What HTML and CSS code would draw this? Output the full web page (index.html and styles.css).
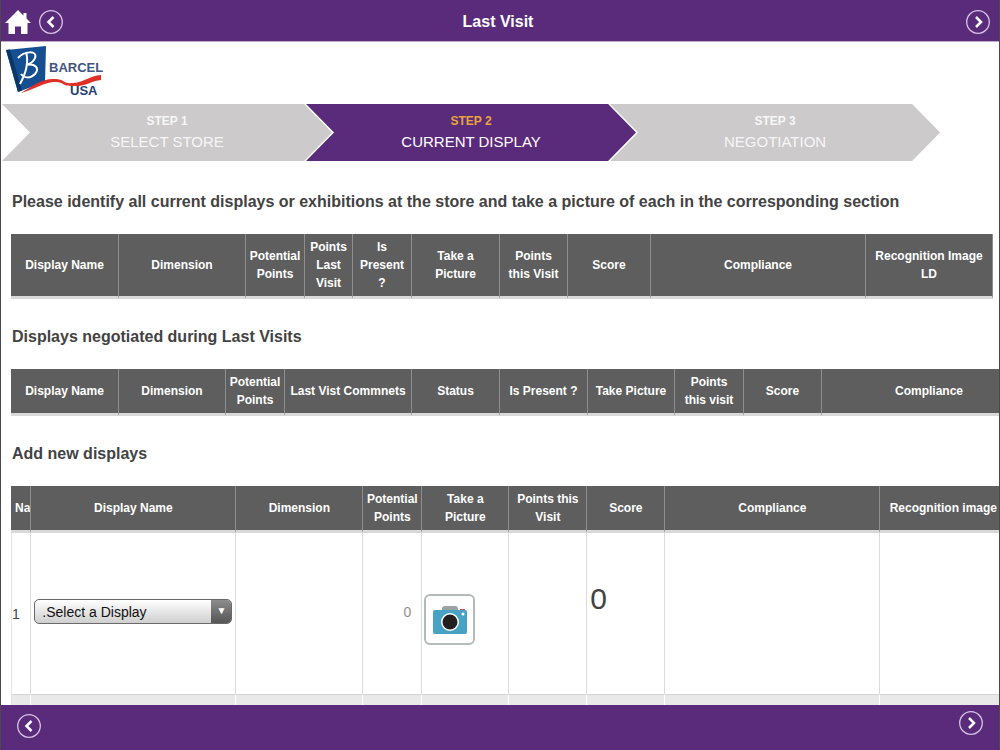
FILE: index.html
```html
<!DOCTYPE html>
<html lang="en">
<head>
<meta charset="utf-8">
<title>Last Visit</title>
<link rel="stylesheet" href="styles.css">
</head>
<body>
<div class="app">
  <header class="topbar">
    <div class="topbar-side">
      <button class="icon-btn" type="button" aria-label="Home">
        <svg width="26" height="26" viewBox="0 0 26 26"><path fill="#fff" d="M13 1 L18.500 6.500 V4 H21.500 V9.500 L26 14 H22.500 V25 H16 V17.500 H10 V25 H3.500 V14 H0 Z"/></svg>
      </button>
      <button class="icon-btn" type="button" aria-label="Back">
        <svg width="26" height="26" viewBox="0 0 26 26" fill="none"><circle cx="13" cy="13" r="11.300" stroke="#d5c5e3" stroke-width="1.300"/><path d="M15.500 8 L10.500 13 L15.500 18" stroke="#fff" stroke-width="2.500"/></svg>
      </button>
    </div>
    <h1 class="title">Last Visit</h1>
    <div class="topbar-side topbar-end">
      <button class="icon-btn" type="button" aria-label="Next">
        <svg width="26" height="26" viewBox="0 0 26 26" fill="none"><circle cx="13" cy="13" r="11.300" stroke="#d5c5e3" stroke-width="1.300"/><path d="M11 8 L16 13 L11 18" stroke="#fff" stroke-width="2.500"/></svg>
      </button>
    </div>
  </header>

  <main class="content">
    <svg class="logo" width="110" height="61" viewBox="0 0 110 61" role="img" aria-label="Barcel USA">
      <path d="M5 8 L45 4 L44 40 L17 50 Z" fill="#154f92"/>
      <path d="M5 8 L9 7.500 L21 48.500 L17 50 Z" fill="#0b3768"/>
      <path d="M25 10 C28 20 25 31 19 42 M17 16 C23 9 37 8 34 16 C32 21 28 22 25 23 C34 21 39 26 34 32 C29 37 23 36 20 32" fill="none" stroke="#fff" stroke-width="2"/>
      <path d="M20 51 C33 43 42 36 54 37 C64 37 61 42 72 41 C84 40 88 34 100 33 V38 C90 39 84 45 72 44 C61 44 64 41 56 40 C45 39 34 47 20 51 Z" fill="#de3027"/>
      <text x="48" y="30" class="logo-text">BARCEL</text>
      <text x="69" y="53" class="logo-text logo-usa">USA</text>
    </svg>

    <nav class="steps" aria-label="Steps">
      <div class="step"><span class="step-no">STEP 1</span><span class="step-name">SELECT STORE</span></div>
      <div class="step step-current" aria-current="step"><span class="step-no">STEP 2</span><span class="step-name">CURRENT DISPLAY</span></div>
      <div class="step"><span class="step-no">STEP 3</span><span class="step-name">NEGOTIATION</span></div>
    </nav>

    <section class="section">
      <h2 class="heading">Please identify all current displays or exhibitions at the store and take a picture of each in the corresponding section</h2>
      <table class="grid grid-current">
        <colgroup><col class="w108"><col class="w127"><col class="w59"><col class="w48"><col class="w59"><col class="w88"><col class="w68"><col class="w83"><col class="w215"><col class="w127"></colgroup>
        <thead><tr>
          <th>Display Name</th><th>Dimension</th><th>Potential Points</th><th>Points Last Visit</th><th>Is Present ?</th><th>Take a<br>Picture</th><th>Points<br>this Visit</th><th>Score</th><th>Compliance</th><th>Recognition Image LD</th>
        </tr></thead>
      </table>
    </section>

    <section class="section">
      <h2 class="heading">Displays negotiated during Last Visits</h2>
      <table class="grid">
        <colgroup><col class="w108"><col class="w107"><col class="w59"><col class="w127"><col class="w88"><col class="w88"><col class="w87"><col class="w69"><col class="w78"><col class="w215"></colgroup>
        <thead><tr>
          <th>Display Name</th><th>Dimension</th><th>Potential Points</th><th>Last Vist Commnets</th><th>Status</th><th>Is Present ?</th><th>Take Picture</th><th>Points<br>this visit</th><th>Score</th><th>Compliance</th>
        </tr></thead>
      </table>
    </section>

    <section class="section">
      <h2 class="heading">Add new displays</h2>
      <table class="grid">
        <colgroup><col class="w20"><col class="w205"><col class="w127"><col class="w59"><col class="w87"><col class="w78"><col class="w78"><col class="w215"><col class="w127"></colgroup>
        <thead><tr>
          <th class="clipped">Na</th><th>Display Name</th><th>Dimension</th><th>Potential Points</th><th>Take a<br>Picture</th><th>Points this<br>Visit</th><th>Score</th><th>Compliance</th><th>Recognition image</th>
        </tr></thead>
        <tbody>
          <tr class="row">
            <td class="row-no">1</td>
            <td>
              <div class="select-box">
                <select class="select" aria-label="Display Name"><option>.Select a Display</option></select>
              </div>
            </td>
            <td></td>
            <td class="potential">0</td>
            <td class="photo">
              <button class="camera" type="button" aria-label="Take a picture">
                <svg width="34" height="28" viewBox="0 0 34 28"><path d="M9 5 V3 Q9 0 12 0 H22 Q25 0 25 3 V5 Z" fill="#99a3a3"/><path d="M27 4 V3 H32 V4 Z" fill="#d6536d"/><rect x="0" y="4" width="34" height="24" rx="2" fill="#48a2c4"/><circle cx="17" cy="16" r="9" fill="#fff"/><circle cx="17" cy="16" r="7.500" fill="#231f20"/><circle cx="30" cy="8" r="1.500" fill="#fff"/></svg>
              </button>
            </td>
            <td></td>
            <td class="score">0</td>
            <td></td>
            <td></td>
          </tr>
          <tr class="row row-alt"><td></td><td></td><td></td><td></td><td></td><td></td><td></td><td></td><td></td></tr>
        </tbody>
      </table>
    </section>
  </main>

  <footer class="bottombar">
    <button class="icon-btn" type="button" aria-label="Previous page">
      <svg width="26" height="26" viewBox="0 0 26 26" fill="none"><circle cx="13" cy="13" r="11.300" stroke="#d5c5e3" stroke-width="1.300"/><path d="M15.500 8 L10.500 13 L15.500 18" stroke="#fff" stroke-width="2.500"/></svg>
    </button>
    <button class="icon-btn bottom-next" type="button" aria-label="Next page">
      <svg width="26" height="26" viewBox="0 0 26 26" fill="none"><circle cx="13" cy="13" r="11.300" stroke="#d5c5e3" stroke-width="1.300"/><path d="M11 8 L16 13 L11 18" stroke="#fff" stroke-width="2.500"/></svg>
    </button>
  </footer>
</div>
</body>
</html>
```
FILE: styles.css
```css
* { box-sizing: border-box; }

body {
  margin: 0;
  font-family: "Liberation Sans", Arial, Helvetica, sans-serif;
  color: #434343;
  background: #fff;
}

.app {
  display: flex;
  flex-direction: column;
  height: 100vh;
  border: solid #4a4a4a;
  border-width: 0 1px;
  overflow: hidden;
}

.topbar {
  display: flex;
  align-items: center;
  flex: none;
  height: 42px;
  padding: 2px 8px 0 4px;
  background: #5b2b7b;
  border-bottom: 1px solid #b9a8c6;
}

.topbar-side {
  display: flex;
  flex: 1;
  gap: 7px;
}

.topbar-end { justify-content: flex-end; }

.title {
  margin: 0;
  font-size: 16px;
  line-height: 20px;
  color: #fff;
}

.icon-btn {
  display: block;
  padding: 0;
  border: 0;
  background: none;
}

.icon-btn svg { display: block; }

.content {
  flex: 1;
  min-height: 0;
  overflow: hidden;
}

.logo { display: block; }

.logo-text {
  font-size: 13px;
  font-weight: bold;
  fill: #41547f;
}

.logo-usa { fill: #23407a; }

.steps {
  display: flex;
  width: 94%;
  margin: 1px 0 3px 1px;
}

.step {
  display: flex;
  flex: 1 0 0;
  flex-direction: column;
  align-items: center;
  height: 57px;
  padding: 7px 26px 0;
  background: #cccacb;
  color: #f7f7f7;
  clip-path: polygon(0 0, calc(100% - 28px) 0, 100% 50%, calc(100% - 28px) 100%, 0 100%, 28px 50%);
}

.step + .step { margin-left: -26px; }

.step-no {
  font-size: 12px;
  font-weight: bold;
  line-height: 20px;
}

.step-name {
  font-size: 15px;
  line-height: 22px;
}

.step-current {
  background: #5b2b7b;
  color: #fff;
}

.step-current .step-no { color: #e8a33d; }

.section {
  padding: 26px 7px 0 10px;
}

.heading {
  margin: 0 0 20px 1px;
  font-size: 16px;
  line-height: 24px;
  white-space: nowrap;
}

.grid {
  width: max-content;
  table-layout: fixed;
  border-spacing: 0;
}

.grid-current { width: 100%; }

.grid th {
  padding: 4px 3px;
  background: #5e5e5e;
  border-right: 1px solid #8e8e8e;
  border-bottom: 3px solid #d9d9d9;
  color: #fff;
  font-size: 12px;
  line-height: 18px;
}

.grid th.clipped {
  padding: 4px 0 4px 4px;
  overflow: hidden;
  text-align: left;
  white-space: nowrap;
}

.grid td {
  padding: 0 3px;
  border-right: 1px solid #dadada;
}

.grid td:first-child { border-left: 1px solid #e4e4e4; }

.row { height: 161px; }

.row-alt {
  background: #e9e9e9;
}

.row-alt td {
  border-color: #fff;
  border-top: 1px solid #d4d4d4;
}

.grid .row-no {
  padding: 0;
  font-size: 14px;
}

.select-box {
  position: relative;
  margin-bottom: 4px;
}

.select-box::after {
  content: "▼";
  position: absolute;
  top: 1px;
  right: 1px;
  bottom: 1px;
  width: 20px;
  border-radius: 0 4px 4px 0;
  background: linear-gradient(#8c8c8c, #555);
  color: #fff;
  font-size: 10px;
  line-height: 22px;
  text-align: center;
  pointer-events: none;
}

.select {
  display: block;
  width: 100%;
  height: 25px;
  padding: 0 24px 0 7px;
  appearance: none;
  border: 1px solid #6a6a6a;
  border-radius: 5px;
  background: linear-gradient(#fff, #cfcfcf);
  color: #111;
  font-family: inherit;
  font-size: 14px;
}

.grid .potential {
  padding: 0 10px 4px 0;
  color: #8e8e8e;
  font-size: 14px;
  text-align: right;
}

.grid .photo { padding: 12px 2px 0; }

.camera {
  display: flex;
  align-items: center;
  justify-content: center;
  width: 51px;
  height: 51px;
  padding: 0;
  border: 2px solid #b3bab9;
  border-radius: 6px;
  background: #fff;
}

.grid .score {
  padding-bottom: 30px;
  font-size: 30px;
}

.w20 { width: 20px; }
.w48 { width: 48px; }
.w59 { width: 59px; }
.w68 { width: 68px; }
.w69 { width: 69px; }
.w78 { width: 78px; }
.w83 { width: 83px; }
.w87 { width: 87px; }
.w88 { width: 88px; }
.w107 { width: 107px; }
.w108 { width: 108px; }
.w127 { width: 127px; }
.w205 { width: 205px; }
.w215 { width: 215px; }

.bottombar {
  display: flex;
  align-items: flex-start;
  justify-content: space-between;
  flex: none;
  height: 45px;
  padding: 5px 15px 0;
  background: #5b2b7b;
}

.bottombar .icon-btn { padding-top: 3px; }
.bottombar .bottom-next { padding-top: 0; }
```
